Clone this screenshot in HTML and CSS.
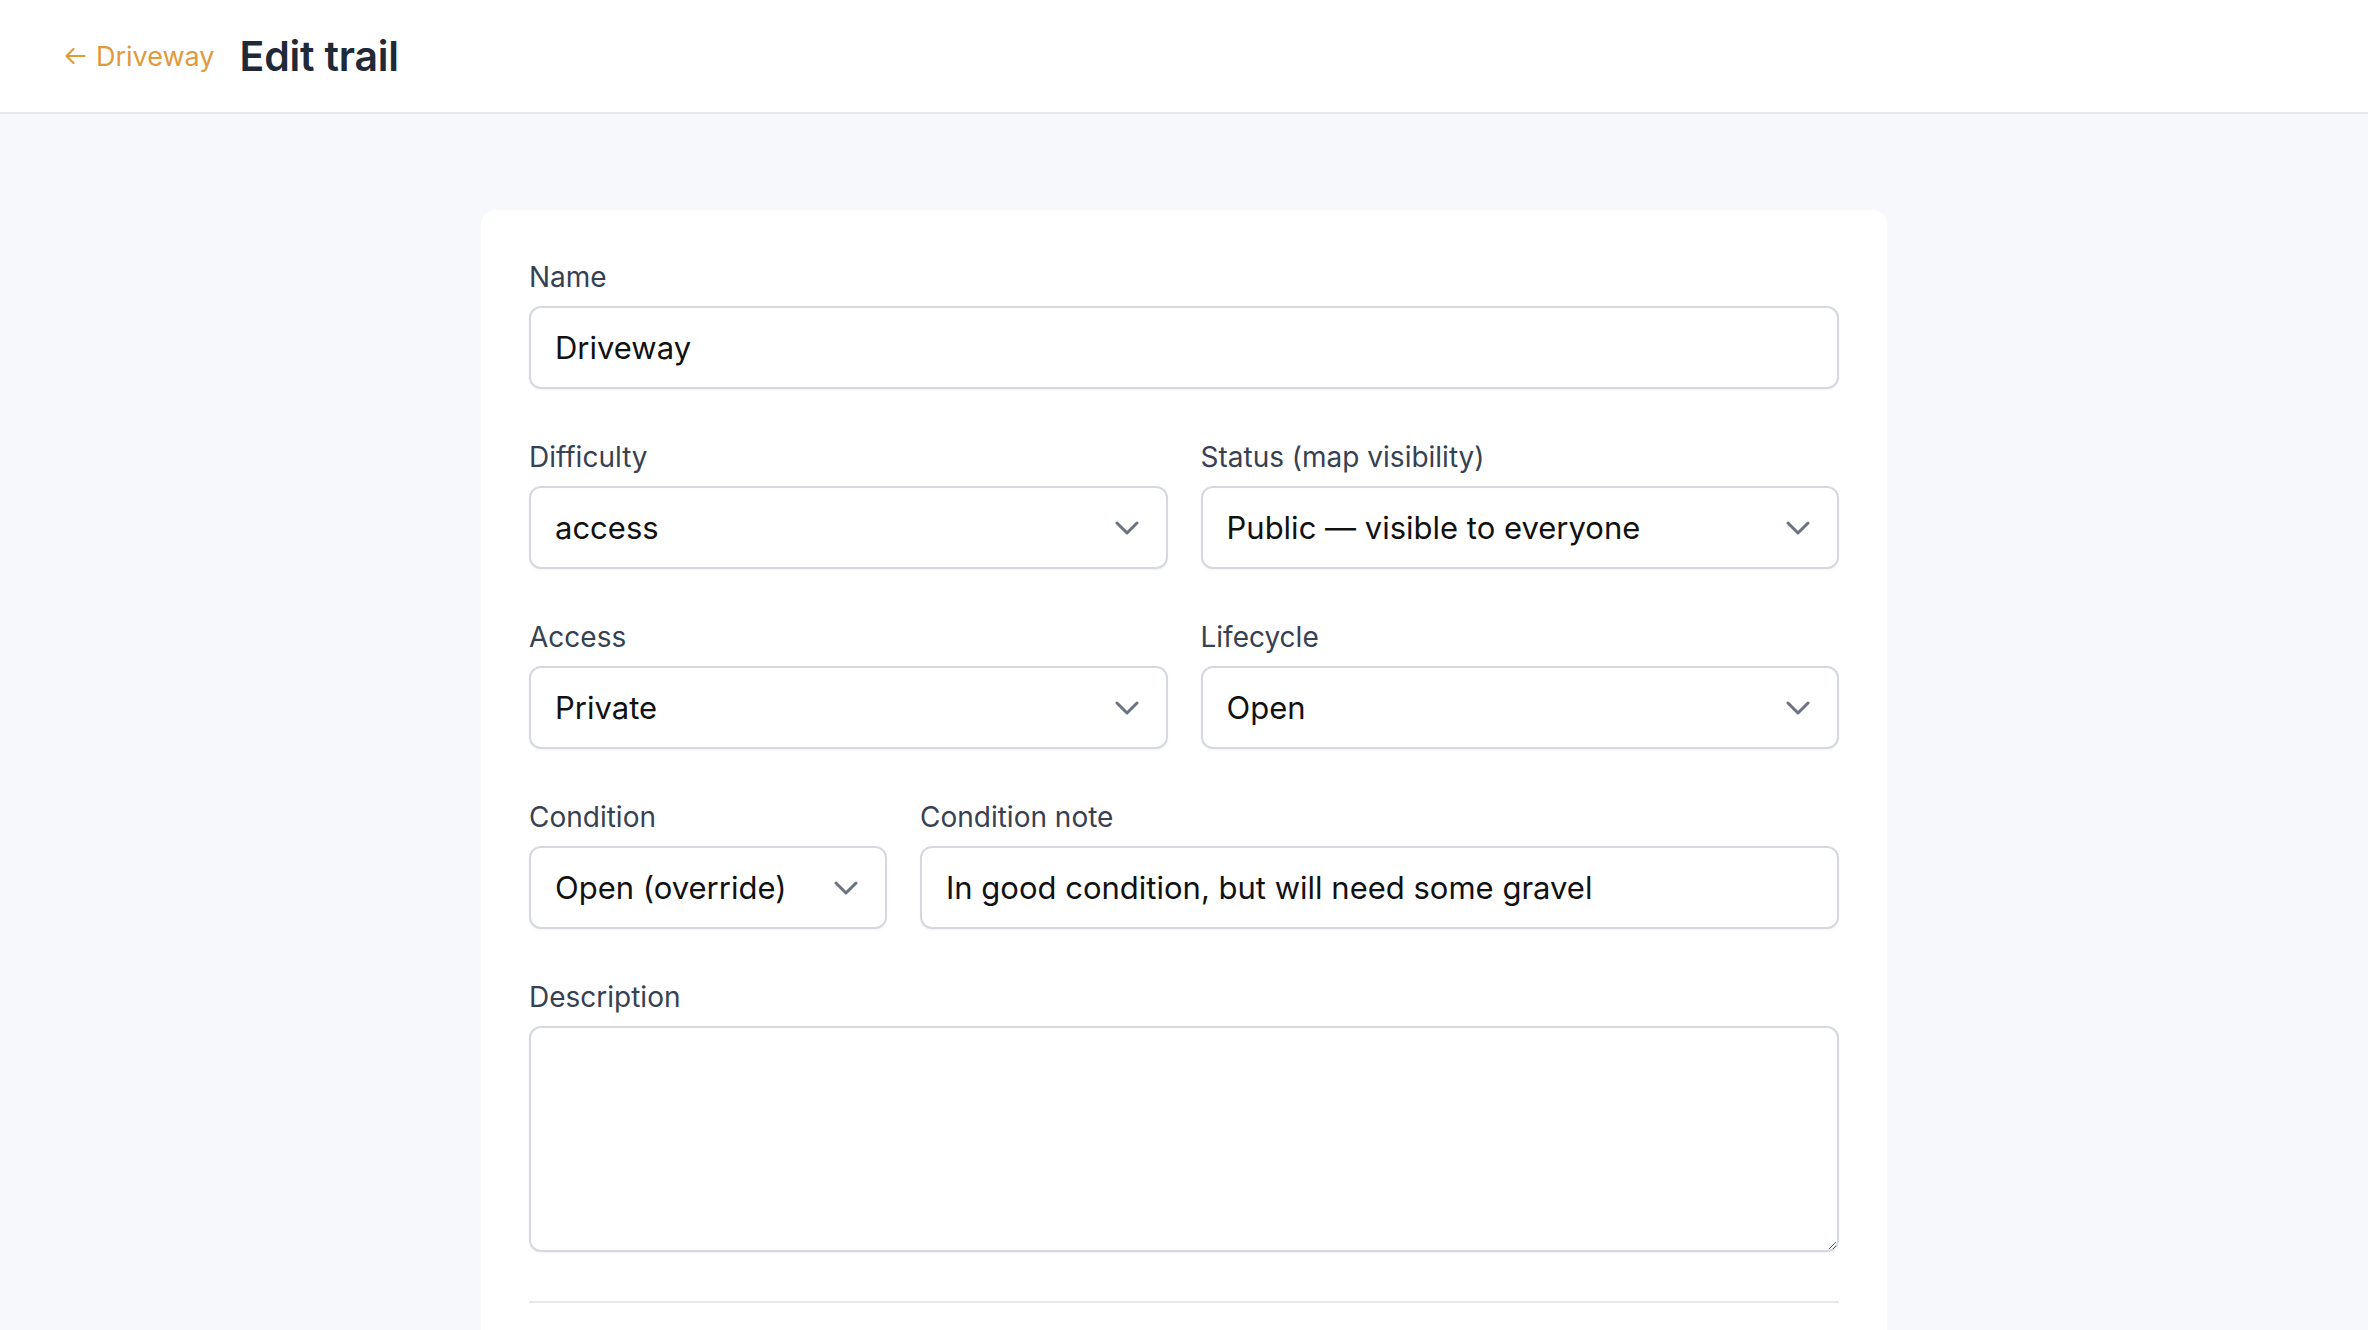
FILE: index.html
```html
<!DOCTYPE html>
<html lang="en">
<head>
<meta charset="utf-8">
<title>Edit trail</title>
<link rel="stylesheet" href="styles.css">
</head>
<body>
<header class="topbar">
  <a class="back-link" href="#">
    <svg class="back-arrow" width="22" height="18" viewBox="0 0 22 18" aria-hidden="true">
      <path d="M20.5 9H2.5M9.5 2L2.5 9l7 7" fill="none" stroke="currentColor" stroke-width="2.2" stroke-linecap="round" stroke-linejoin="round"/>
    </svg>
    <span>Driveway</span>
  </a>
  <h1 class="page-title">Edit trail</h1>
</header>
<main class="main">
  <form class="card">
    <div class="field">
      <label class="label">Name</label>
      <input class="control" type="text" value="Driveway">
    </div>
    <div class="row two">
      <div class="field">
        <label class="label">Difficulty</label>
        <div class="select-wrap">
          <select class="control select"><option>access</option></select>
          <svg class="chev" width="24" height="14" viewBox="0 0 24 14" aria-hidden="true"><path d="M2 2l10 10L22 2" fill="none" stroke="currentColor" stroke-width="3" stroke-linecap="round" stroke-linejoin="round"/></svg>
        </div>
      </div>
      <div class="field">
        <label class="label">Status (map visibility)</label>
        <div class="select-wrap">
          <select class="control select"><option>Public — visible to everyone</option></select>
          <svg class="chev" width="24" height="14" viewBox="0 0 24 14" aria-hidden="true"><path d="M2 2l10 10L22 2" fill="none" stroke="currentColor" stroke-width="3" stroke-linecap="round" stroke-linejoin="round"/></svg>
        </div>
      </div>
    </div>
    <div class="row two">
      <div class="field">
        <label class="label">Access</label>
        <div class="select-wrap">
          <select class="control select"><option>Private</option></select>
          <svg class="chev" width="24" height="14" viewBox="0 0 24 14" aria-hidden="true"><path d="M2 2l10 10L22 2" fill="none" stroke="currentColor" stroke-width="3" stroke-linecap="round" stroke-linejoin="round"/></svg>
        </div>
      </div>
      <div class="field">
        <label class="label">Lifecycle</label>
        <div class="select-wrap">
          <select class="control select"><option>Open</option></select>
          <svg class="chev" width="24" height="14" viewBox="0 0 24 14" aria-hidden="true"><path d="M2 2l10 10L22 2" fill="none" stroke="currentColor" stroke-width="3" stroke-linecap="round" stroke-linejoin="round"/></svg>
        </div>
      </div>
    </div>
    <div class="row cond">
      <div class="field">
        <label class="label">Condition</label>
        <div class="select-wrap">
          <select class="control select"><option>Open (override)</option></select>
          <svg class="chev" width="24" height="14" viewBox="0 0 24 14" aria-hidden="true"><path d="M2 2l10 10L22 2" fill="none" stroke="currentColor" stroke-width="3" stroke-linecap="round" stroke-linejoin="round"/></svg>
        </div>
      </div>
      <div class="field">
        <label class="label">Condition note</label>
        <input class="control" type="text" value="In good condition, but will need some gravel">
      </div>
    </div>
    <div class="field">
      <label class="label">Description</label>
      <textarea class="control textarea"></textarea>
    </div>
    <hr class="divider">
  </form>
</main>
</body>
</html>
```

FILE: styles.css
```css
* { box-sizing: border-box; }
html, body { margin: 0; padding: 0; }
body {
  font-family: Inter, "Noto Sans", sans-serif;
  background: #f7f8fb;
  color: #111827;
  min-height: 1330px;
}
.topbar {
  height: 114px;
  background: #ffffff;
  border-bottom: 2px solid #e5e7eb;
  display: flex;
  align-items: center;
  gap: 25px;
  padding: 0 64px;
}
.back-link {
  display: flex;
  align-items: center;
  gap: 10px;
  color: #e0993b;
  text-decoration: none;
  font-size: 27px;
  margin-top: 0;
}
.back-arrow { display: block; }
.page-title {
  margin: 0;
  font-size: 41px;
  font-weight: 600;
  color: #1f2937;
  letter-spacing: -0.2px;
}
.main {
  padding: 96px 0 0;
  display: flex;
  justify-content: center;
}
.card {
  width: 1406px;
  background: #ffffff;
  border-radius: 14px 14px 0 0;
  padding: 48px 48px 60px;
  display: flex;
  flex-direction: column;
  gap: 49px;
}
.row { display: grid; gap: 33px; }
.row.two { grid-template-columns: 1fr 1fr; }
.row.cond { grid-template-columns: 358px 1fr; }
.field { display: flex; flex-direction: column; gap: 10px; }
.label {
  font-size: 28px;
  line-height: 38px;
  color: #374151;
}
.control {
  font-family: Inter, "Noto Sans", sans-serif;
  font-size: 31px;
  color: #111111;
  height: 83px;
  width: 100%;
  border: 2px solid #d5d9df;
  border-radius: 12px;
  background: #ffffff;
  padding: 0 24px;
  box-shadow: 0 1px 2px rgba(0, 0, 0, 0.05);
  outline: none;
}
.select-wrap { position: relative; }
.select {
  appearance: none;
  -webkit-appearance: none;
  padding-right: 70px;
}
.chev {
  position: absolute;
  right: 29px;
  top: 35px;
  color: #6b7280;
  pointer-events: none;
}
.textarea {
  height: 226px;
  resize: vertical;
  padding: 16px 24px;
  display: block;
}
.divider {
  margin: 0;
  border: 0;
  border-top: 2px solid #e5e7eb;
}
```
